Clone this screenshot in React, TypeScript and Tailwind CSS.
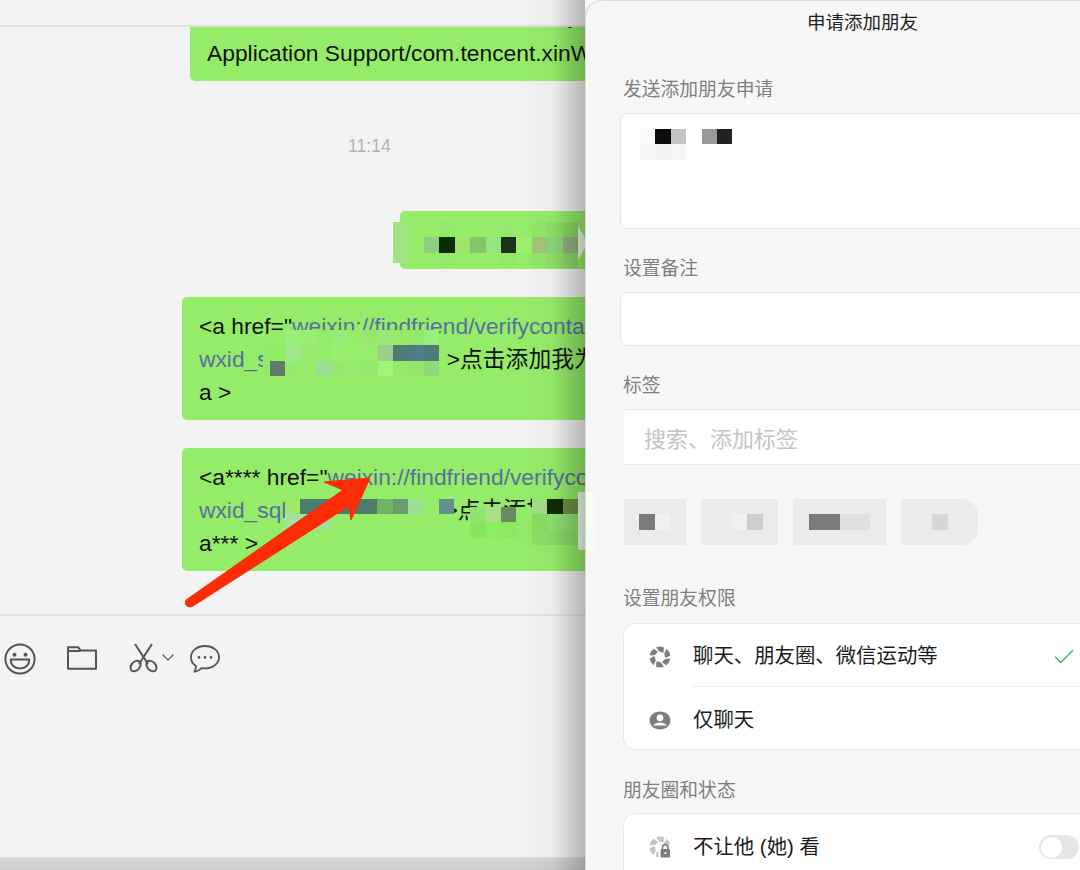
import React from "react";
import { Check } from "lucide-react";

const Mosaic: React.FC<{ rows: string[][]; className: string }> = ({ rows, className }) => (
  <div className={`absolute flex flex-col ${className}`}>
    {rows.map((row, i) => (
      <div key={i} className="flex">
        {row.map((color, j) => (
          <div key={j} className="h-[15.4px] w-[15.4px]" style={{ backgroundColor: color }} />
        ))}
      </div>
    ))}
  </div>
);

const Label: React.FC<{ children: React.ReactNode; className?: string }> = ({ children, className }) => (
  <div className={`h-[24px] text-[18.8px] leading-[24px] text-[#7f7f7f] ${className}`}>{children}</div>
);

const Blades = ({ fill }: { fill: string }) => (
  <>
    {[0, 60, 120, 180, 240, 300].map((deg) => (
      <path key={deg} d="M8.1 2.3A10.5 10.5 0 0 1 15.9 2.3L15.6 7.7L11.1 6.6Z" fill={fill} transform={`rotate(${deg} 12 12)`} />
    ))}
  </>
);

const Aperture = () => (
  <svg viewBox="0 0 24 24" className="h-[24px] w-[24px]">
    <Blades fill="#7d7d7d" />
  </svg>
);

const PersonBubble = () => (
  <svg viewBox="0 0 22 20" className="h-[20px] w-[22px]">
    <path d="M11 0.6C5 0.6 0.6 4.4 0.6 9.4C0.6 14.4 5 18.4 11 18.4C17 18.4 21.4 14.4 21.4 9.4C21.4 4.4 17 0.6 11 0.6Z" fill="#7d7d7d" />
    <circle cx="11" cy="6.8" r="3.4" fill="#fff" />
    <path d="M4.4 14.4C5.8 12.2 8.4 11.4 11 11.4C13.6 11.4 16.2 12.2 17.6 14.4Z" fill="#fff" />
  </svg>
);

const ApertureLock = () => (
  <svg viewBox="0 0 24 24" className="h-[24px] w-[24px]">
    <Blades fill="#c4c4c4" />
    <rect x="10.5" y="9.5" width="14" height="15" fill="#fff" />
    <path d="M14.5 14V12.2C14.5 10.6 15.6 9.6 17.2 9.6C18.8 9.6 19.9 10.6 19.9 12.2V14" fill="none" stroke="#7d7d7d" strokeWidth="1.6" />
    <rect x="12.6" y="14" width="9.4" height="8.6" rx="1" fill="#7d7d7d" />
    <circle cx="17.3" cy="18" r="1.1" fill="#fff" />
  </svg>
);

export default function App() {
  return (
    <div className="flex h-[870px] w-[1080px] overflow-hidden bg-[#f7f7f7] [font-family:'Liberation_Sans','Noto_Sans_CJK_SC',sans-serif]">
      {/* chat window */}
      <div className="relative w-[585px] shrink-0 overflow-hidden">
        <div className="h-[857px] bg-[#f3f3f3]">
          <div className="relative z-10 h-[27px] border-b-2 border-[#e0e0e0] bg-[#f3f3f3]" />

          <div className="h-[587px] overflow-hidden text-[22.8px] leading-[33px] text-[#111]">
            <div className="-mt-[41px] ml-[190px] w-[600px] whitespace-nowrap rounded-[5px] bg-[#95ec69] px-[17px] pb-[11px] pt-[13px]">
              <div className="mb-[5px]">com.tencent.xinWeChat/Data/Library/</div>
              <div>Application Support/com.tencent.xinWeChat/</div>
            </div>

            <div className="ml-[348px] mt-[55px] h-[20px] text-[17.6px] leading-[20px] text-[#b2b2b2]">11:14</div>

            <div className="relative ml-[400px] mt-[55px] h-[58px] w-[300px] rounded-[5px] bg-[#95ec69]">
              <div className="absolute -left-[7px] top-[11px] h-[41px] w-[15px] bg-[#a2e384]" />
              <Mosaic
                className="left-[24px] top-[11px]"
                rows={[
                  ["#95ec69", "#92e868", "#95ec69", "#95ec69", "#95ec69", "#97e870", "#95ec69", "#93e768", "#8fe066", "#8bd964"],
                  ["#8fcf7e", "#0e2a05", "#9fe36a", "#84c46b", "#98e57f", "#1a3317", "#9cf06c", "#a5c47a", "#8ed67b", "#94b07f"],
                  ["#95ec69", "#92e868", "#95ec69", "#95ec69", "#95ec69", "#93e868", "#95ec69", "#93e768", "#8fe066", "#8bd964"],
                ]}
              />
              <div className="absolute left-[178px] top-[15px] h-0 w-0 border-y-[17px] border-l-[10px] border-y-transparent border-l-[#eaffea]" />
            </div>

            <div className="relative ml-[182px] mt-[28px] h-[123px] w-[600px] whitespace-nowrap rounded-[5px] bg-[#95ec69] px-[17px] pb-[11px] pt-[13px]">
              <div>
                &lt;a href="<span className="text-[#5b6f9f]">weixin://findfriend/verifycontact?</span>
              </div>
              <div>
                <span className="text-[#5b6f9f]">wxid_s</span>
                <span className="inline-block w-[178px]" />
                &gt;点击添加我为好友&lt;/
              </div>
              <div>a &gt;</div>
              <div className="absolute left-[81px] top-[36px] h-[42px] w-[8px] rounded-l-full bg-[#93ea70]" />
              <Mosaic
                className="left-[88px] top-[33px]"
                rows={[
                  ["#95ec69", "#98f07a", "#99ee78", "#95ec69", "#98ec78", "#96ee66", "#9be66f", "#9ae878", "#96ea66", "#94e869", "#9aee7c"],
                  ["#8ef060", "#a0e88a", "#97ec6e", "#95ec69", "#9af06e", "#95f06c", "#96ee6c", "#9bcf8a", "#4f7b76", "#517c86", "#507a78"],
                  ["#5e7a6a", "#95ea6a", "#95ec69", "#9ade90", "#95e86e", "#97ea6e", "#95e86e", "#a2f478", "#96e868", "#94e46c", "#90d97a"],
                ]}
              />
            </div>

            <div className="relative ml-[182px] mt-[28px] h-[123px] w-[600px] whitespace-nowrap rounded-[5px] bg-[#95ec69] px-[17px] pb-[11px] pt-[13px]">
              <div>
                &lt;a**** href="<span className="text-[#5b6f9f]">weixin://findfriend/verifycontact?</span>
              </div>
              <div>
                <span className="text-[#5b6f9f]">wxid_sql</span>
                <span className="inline-block w-[158px]" />
                &gt;点击添加我为好友
              </div>
              <div>a*** &gt;</div>
              <Mosaic
                className="left-[103px] top-[51px]"
                rows={[
                  ["#9fe868", "#4e7c6a", "#4e7c6a", "#4f7d6a", "#4f7d6a", "#4f7d6a", "#72b265", "#689c6c", "#9bdf90", "#95ec69", "#64908b"],
                  ["#a0e0a0", "#a0e0a0", "#9ee29a", "#95ec69", "#95ec69", "#95ec69", "#95ec69", "#95ec69", "#95ec69", "#95ec69", "#95ec69"],
                ]}
              />
              <Mosaic
                className="left-[288px] top-[59px]"
                rows={[
                  ["#8ee46c", "#a8e08a", "#688c62", "#90ec6a"],
                  ["#85e85c", "#8bee5e", "#8fe85f", "#92ea68"],
                ]}
              />
              <Mosaic
                className="left-[350px] top-[51px]"
                rows={[
                  ["#a5dc88", "#0f2c05", "#6a9040"],
                  ["#88dd60", "#8ce070", "#90de70"],
                  ["#8adf68", "#8adc68", "#8adc68"],
                ]}
              />
              <div className="absolute left-[396px] top-[44px] h-[58px] w-[15px] bg-[#f0fff0]" />
            </div>
          </div>

          {/* toolbar */}
          <div className="flex h-[243px] items-start border-t-2 border-[#e3e3e3] pl-[4px] pt-[27px] text-[#555]">
            <svg viewBox="0 0 32 32" className="h-[32px] w-[32px]" fill="none" stroke="currentColor" strokeWidth="2">
              <circle cx="16" cy="16" r="14.6" />
              <circle cx="10.5" cy="11.8" r="2" fill="currentColor" stroke="none" />
              <circle cx="21.5" cy="11.8" r="2" fill="currentColor" stroke="none" />
              <path d="M6.8 16.6H25.2C25.2 22.4 21.2 25.4 16 25.4C10.8 25.4 6.8 22.4 6.8 16.6Z" />
            </svg>
            <svg viewBox="0 0 30 24" className="ml-[31px] mt-[3px] h-[24px] w-[30px]" fill="none" stroke="currentColor" strokeWidth="2">
              <path d="M1 22.8V1.2H11L13.6 4.4H29V22.8Z" strokeLinejoin="round" />
              <path d="M1 5H13.6" />
            </svg>
            <svg viewBox="0 0 30 30" className="ml-[32px] h-[30px] w-[30px]" fill="none" stroke="currentColor" strokeWidth="2">
              <path d="M6 1L19 21" />
              <path d="M23 1L10 21" />
              <ellipse cx="6.6" cy="23" rx="6" ry="4.2" transform="rotate(-48 6.6 23)" />
              <ellipse cx="22.4" cy="23" rx="6" ry="4.2" transform="rotate(48 22.4 23)" />
            </svg>
            <svg viewBox="0 0 12 7" className="ml-[3px] mt-[11px] h-[7px] w-[12px]" fill="none" stroke="currentColor" strokeWidth="1.2">
              <path d="M0.6 0.6L6 6L11.4 0.6" />
            </svg>
            <svg viewBox="0 0 30 28" className="ml-[16px] mt-[2px] h-[28px] w-[30px]" fill="none" stroke="currentColor" strokeWidth="1.8">
              <path d="M15 1C7.4 1 1 5.6 1 12.2C1 16 3 19 6 21C6 23.2 5.4 25 4.4 26.8C7.4 26.4 9.8 25.2 11.6 23.2C12.8 23.4 13.8 23.4 15 23.4C22.6 23.4 29 18.6 29 12.2C29 5.6 22.6 1 15 1Z" strokeLinejoin="round" />
              <circle cx="9" cy="12.4" r="1.3" fill="currentColor" stroke="none" />
              <circle cx="15" cy="12.4" r="1.3" fill="currentColor" stroke="none" />
              <circle cx="21" cy="12.4" r="1.3" fill="currentColor" stroke="none" />
            </svg>
          </div>
        </div>
        <div className="h-[13px] border-t border-[#dddddd] bg-gradient-to-b from-[#d6d6d6] to-[#cdcdcd]" />

        {/* panel's shadow falling on the chat window */}
        <div className="pointer-events-none absolute inset-y-0 right-0 z-20 w-[64px] bg-gradient-to-r from-transparent via-black/[0.03] to-black/25" />

        {/* red arrow annotation */}
        <svg className="absolute left-0 top-0 z-30 h-[870px] w-[585px]" viewBox="0 0 585 870">
          <path
            d="M370 478L324 482L343 490L186 600Q184 604 187 606Q190 608 193 606L349 506L351 520Z"
            fill="#fb2c06"
            stroke="#fb2c06"
            strokeWidth="1"
            strokeLinejoin="round"
          />
        </svg>
      </div>

      {/* add friend panel */}
      <div className="relative flex-1 overflow-hidden">
        <div className="absolute -left-[1px] top-0 h-[900px] w-[520px] rounded-tl-[18px] border-l-2 border-t border-[#dcdcdc] bg-[#f7f7f7] pl-[37px]">
          <div className="absolute left-0 top-[491px] h-[59px] w-[9px] bg-[#f4fff2]" />
          <div className="-ml-[37px] h-[44px] w-[553px] pt-[10px] text-center text-[18.5px] leading-[24px] text-[#222]">申请添加朋友</div>

          <Label className="mt-[33px]">发送添加朋友申请</Label>
          <div className="relative -ml-[3px] mt-[11px] h-[116px] rounded-l-[8px] border border-[#e5e5e5] bg-white">
            <Mosaic
              className="left-[19px] top-[15px]"
              rows={[
                ["#fbfbfb", "#0d0d0d", "#c4c4c4", "#ffffff", "#999999", "#222222"],
                ["#f7f7f7", "#f3f3f3", "#f5f5f5", "#ffffff", "#ffffff", "#ffffff"],
              ]}
            />
          </div>

          <Label className="mt-[28px]">设置备注</Label>
          <div className="-ml-[3px] mt-[11px] h-[54px] rounded-l-[8px] border border-[#e5e5e5] bg-white" />

          <Label className="mt-[28px]">标签</Label>
          <div className="ml-[1px] mt-[11px] h-[56px] rounded-l-[3px] border-y border-[#e8e8e8] bg-white pl-[20px] text-[22px] leading-[59px] text-[#c4c4c4]">
            搜索、添加标签
          </div>

          <div className="ml-[1px] mt-[34px] flex h-[46px] gap-[15px]">
            <div className="flex w-[62px] items-center bg-[#ebebeb] pl-[15px]">
              <div className="h-[16px] w-[16px] bg-[#7a7a7a]" />
              <div className="h-[16px] w-[15px] bg-[#f0f0f0]" />
            </div>
            <div className="flex w-[77px] items-center bg-[#ebebeb] pl-[31px]">
              <div className="h-[16px] w-[15px] bg-[#f0f0f0]" />
              <div className="h-[16px] w-[16px] bg-[#cdcdcd]" />
            </div>
            <div className="flex w-[93px] items-center bg-[#ebebeb] pl-[16px]">
              <div className="h-[16px] w-[31px] bg-[#7a7a7a]" />
              <div className="h-[16px] w-[30px] bg-[#e0e0e0]" />
            </div>
            <div className="flex w-[77px] items-center rounded-r-[16px] bg-[#ebebeb] pl-[31px]">
              <div className="h-[16px] w-[16px] bg-[#d6d6d6]" />
            </div>
          </div>

          <Label className="mt-[42px]">设置朋友权限</Label>
          <div className="mt-[12px] h-[127px] rounded-l-[12px] border border-[#e8e8e8] bg-white text-[20.4px] text-[#1c1c1c]">
            <div className="flex h-[62px] items-center pl-[24px] pt-[3px]">
              <Aperture />
              <span className="ml-[21px] flex-1">聊天、朋友圈、微信运动等</span>
              <Check className="mr-[26px] h-[26px] w-[26px] text-[#2bc767]" strokeWidth={1.4} />
            </div>
            <div className="ml-[69px] border-t border-[#ececec]" />
            <div className="flex h-[62px] items-center pl-[25px] pt-[5px]">
              <PersonBubble />
              <span className="ml-[22px]">仅聊天</span>
            </div>
          </div>

          <Label className="mt-[29px]">朋友圈和状态</Label>
          <div className="mt-[10px] h-[80px] rounded-l-[12px] border border-[#e8e8e8] bg-white text-[20.4px] text-[#1c1c1c]">
            <div className="flex h-[66px] items-center pl-[24px]">
              <ApertureLock />
              <span className="ml-[21px] flex-1">不让他 (她) 看</span>
              <div className="mr-[24px] flex h-[24px] w-[40px] items-center rounded-full bg-[#e6e6e6] pl-[2px]">
                <div className="h-[21px] w-[21px] rounded-full bg-white" />
              </div>
            </div>
          </div>
        </div>
      </div>
    </div>
  );
}
